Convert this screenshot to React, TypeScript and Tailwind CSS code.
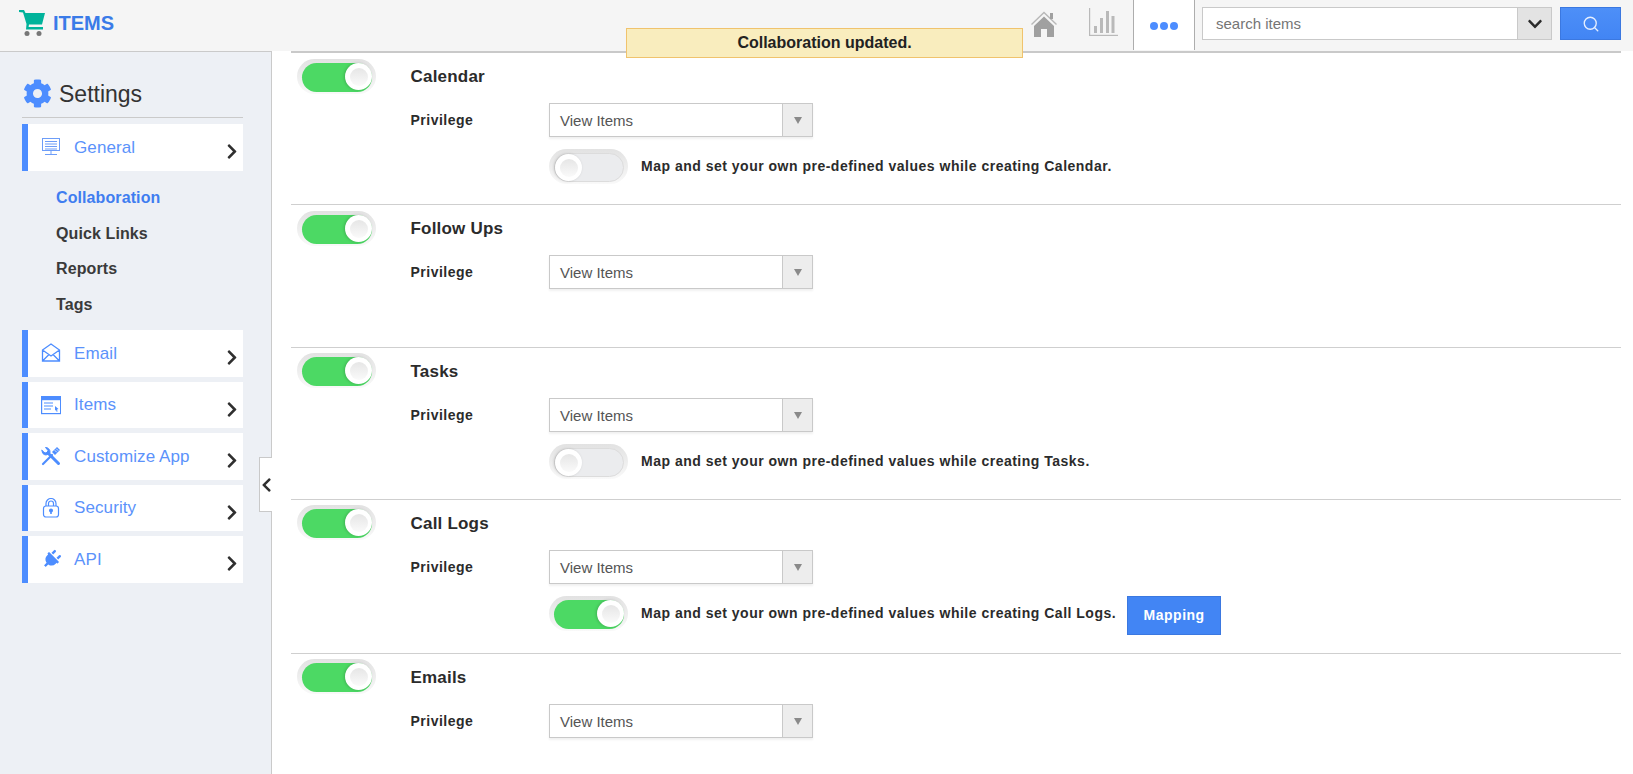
import { FaChevronDown, FaChevronLeft, FaChevronRight, FaCog, FaPlug } from "react-icons/fa";
import { Search } from "lucide-react";
import type { ReactNode } from "react";

const FONT = "font-['Liberation_Sans',Arial,sans-serif]";

function Toggle({ on }: { on: boolean }) {
  return (
    <div className="w-[79px] h-[35px] rounded-full bg-gradient-to-b from-[#e2e2e2] to-[#f9f9f9] pt-[4px] pb-[2px] pl-[5px] pr-[4px] shrink-0">
      <div
        className={
          on
            ? "h-full rounded-full bg-[#4cd964] flex items-start justify-end"
            : "h-full rounded-full bg-[#ebecee] border border-[#dcdcdc] flex items-start justify-start"
        }
      >
        <div className="w-[27px] h-[27px] rounded-full bg-white flex items-center justify-center shadow-[-1px_0_3px_rgba(0,0,0,0.18)]">
          <div className="w-[18px] h-[18px] rounded-full bg-gradient-to-b from-[#e6e6e6] to-[#fafafa]"></div>
        </div>
      </div>
    </div>
  );
}

function Section({
  title,
  height,
  top,
  first,
  map,
}: {
  title: string;
  height: string;
  top: string;
  first?: boolean;
  map?: { label: string; on: boolean; mapping?: boolean };
}) {
  return (
    <section className={`flex pl-[6px] ${first ? "border-t-2 border-[#c9c9c9]" : "border-t border-[#cfcfcf]"} ${height}`}>
      <div className={`w-[113.5px] shrink-0 ${top}`}>
        <Toggle on />
      </div>
      <div className="flex-1">
        <h3 className="pt-[14px] h-[34px] text-[17px] tracking-[0.2px] leading-[20px] font-bold text-[#2b2b2b]">{title}</h3>
        <div className="flex items-center mt-[16px]">
          <span className="w-[138.5px] text-[14px] tracking-[0.5px] font-bold text-[#2b2b2b]">Privilege</span>
          <div className="w-[264px] h-[34px] bg-white border border-[#c9c9c9] shadow-[0_2px_2px_rgba(0,0,0,0.06)] flex">
            <span className="flex-1 pl-[10px] text-[15px] leading-[34px] text-[#555555]">View Items</span>
            <span className="w-[30px] bg-[#ededed] border-l border-[#c9c9c9] flex items-center justify-center">
              <span className="border-x-[4px] border-x-transparent border-t-[7px] border-t-[#8a8a8a]"></span>
            </span>
          </div>
        </div>
        {map && (
          <div className="flex items-start ml-[138.5px] mt-[12px]">
            <Toggle on={map.on} />
            <span className="ml-[13px] text-[14px] leading-[34px] tracking-[0.5px] font-bold text-[#2b2b2b]">{map.label}</span>
            {map.mapping && (
              <span className="ml-[11px] w-[94px] h-[39px] bg-[#4285f4] border border-[#3b78e0] text-white text-[14px] tracking-[0.5px] font-bold flex items-center justify-center">
                Mapping
              </span>
            )}
          </div>
        )}
      </div>
    </section>
  );
}

function NavCard({ icon, label, height = "h-[47px]", className = "" }: { icon: ReactNode; label: string; height?: string; className?: string }) {
  return (
    <div className={`${height} bg-white border-l-[6px] border-[#4d8dff] flex items-center ${className}`}>
      <div className="w-[20px] h-[20px] ml-[13px] flex items-center justify-center text-[#4d8dff] -mt-[1px]">{icon}</div>
      <span className="ml-[13px] text-[17px] tracking-[0.1px] text-[#5b92fb]">{label}</span>
      <FaChevronRight className="ml-auto mr-[5px] mt-[8px] text-[#2f2f2f] w-[12px] h-[17px]" />
    </div>
  );
}

const subLinks = [
  { label: "Collaboration", cls: "text-[#3f7df0]" },
  { label: "Quick Links", cls: "text-[#3a3a3a]" },
  { label: "Reports", cls: "text-[#3a3a3a]" },
  { label: "Tags", cls: "text-[#3a3a3a]" },
];

export default function App() {
  return (
    <div className={`${FONT} w-full h-[774px] overflow-hidden bg-white flex flex-col relative`}>
      {/* header */}
      <header className="h-[51px] shrink-0 bg-[#f5f5f5] flex items-start">
        <div className="flex items-center pl-[18px] h-[46px]">
          <svg width="28" height="28" viewBox="0 0 28 28">
            <path d="M1 1h5l1.5 3H27l-3 11.5H11l-.4 2.5H25v2.5H8L8.5 15 5 3.5 1 3z" fill="#00b39b" />
            <circle cx="9" cy="24.5" r="2.5" fill="#777" />
            <circle cx="21" cy="24.5" r="2.5" fill="#777" />
          </svg>
          <span className="ml-[7px] text-[20px] font-bold text-[#3a7be8]">ITEMS</span>
        </div>
        <div className="ml-auto flex items-start">
          <svg width="26" height="26" viewBox="0 0 26 26" className="mt-[11px] mr-[32px]">
            <path d="M0.5 13.5 13 1.5l12.5 12" fill="none" stroke="#b8b8b8" strokeWidth="1.4" />
            <rect x="19" y="2" width="3" height="6" fill="#a0a0a0" />
            <path d="M3 15 13 5.5 23 15v11h-7v-8h-6v8H3z" fill="#a0a0a0" />
          </svg>
          <svg width="29" height="28" viewBox="0 0 29 28" className="mt-[8px] mr-[15px]" fill="#b9b9b9">
            <rect x="0" y="0" width="1.2" height="28" />
            <rect x="0" y="26.8" width="29" height="1.2" />
            <rect x="5" y="18" width="3" height="7" />
            <rect x="11" y="10" width="3" height="15" />
            <rect x="17" y="3" width="3" height="22" />
            <rect x="22.5" y="8" width="3" height="17" />
          </svg>
          <div className="w-[62px] h-[50px] bg-white border-x border-[#adadad] flex items-center justify-center gap-[2px] pt-[2px]">
            <span className="w-[8px] h-[8px] rounded-full bg-[#4d8dff]"></span>
            <span className="w-[8px] h-[8px] rounded-full bg-[#4d8dff]"></span>
            <span className="w-[8px] h-[8px] rounded-full bg-[#4d8dff]"></span>
          </div>
          <div className="ml-[7px] mt-[7px] w-[350px] h-[33px] bg-white border border-[#c9c9c9] flex">
            <span className="flex-1 pl-[13px] text-[15px] leading-[31px] text-[#757575]">search items</span>
            <span className="w-[34px] bg-[#e3e3e3] border-l border-[#c9c9c9] flex items-center justify-center">
              <FaChevronDown className="w-[16px] h-[16px] text-[#2b2b2b]" />
            </span>
          </div>
          <div className="ml-[8px] mr-[12px] mt-[7px] w-[61px] h-[33px] bg-gradient-to-b from-[#4d8ff8] to-[#4285f4] border border-[#3b78e0] flex items-center justify-center">
            <Search className="w-[18px] h-[18px] text-[#e6efff]" strokeWidth={1.8} />
          </div>
        </div>
      </header>

      <div className="flex-1 flex min-h-0">
        {/* sidebar */}
        <aside className="w-[272px] shrink-0 bg-[#edf0f5] border-r border-t border-[#cacaca] pl-[22px] pr-[28px] relative">
          <div className="h-[66px] flex items-center border-b border-[#cacaca] pl-[1px] pt-[19px]">
            <FaCog className="w-[29px] h-[29px] text-[#4d8dff] -mt-[1px]" />
            <span className="ml-[7px] text-[23px] text-[#333333]">Settings</span>
          </div>
          <NavCard className="mt-[6px]" label="General" icon={
            <svg width="20" height="20" viewBox="0 0 20 20" fill="none" stroke="#6d9df8" strokeWidth="1">
              <rect x="1.5" y="1.5" width="17" height="12" />
              <path d="M4 4.5h12M4 7h12M4 9.5h12M4 12h12M10 14v3M4 17.5h12" />
            </svg>
          } />
          <nav className="pl-[34px] pt-[9px] pb-[8px]">
            {subLinks.map((s) => (
              <div key={s.label} className={`h-[35.5px] text-[16px] tracking-[0.1px] font-bold leading-[35.5px] ${s.cls}`}>{s.label}</div>
            ))}
          </nav>
          <div className="flex flex-col gap-[5px]">
            <NavCard label="Email" icon={
              <svg width="20" height="20" viewBox="0 0 20 20" fill="none" stroke="#4d8dff" strokeWidth="1.3">
                <path d="M1.5 7 10 1 18.5 7v11h-17zM1.5 7 10 13 18.5 7M1.5 18 8 11.5M18.5 18 12 11.5" />
              </svg>
            } />
            <NavCard height="h-[46px]" label="Items" icon={
              <svg width="20" height="20" viewBox="0 0 20 20" fill="none" stroke="#4d8dff" strokeWidth="1.2">
                <rect x="0.6" y="1.6" width="19" height="17" />
                <rect x="0.6" y="1.6" width="19" height="3" fill="#4d8dff" />
                <path d="M3 8h9M3 11h9M3 14h7" />
                <path d="M14 11l3.5 3-1.5.5.6 2-1 .3-.6-2-1 .9z" fill="#4d8dff" stroke="none" />
              </svg>
            } />
            <NavCard label="Customize App" icon={
              <svg width="20" height="20" viewBox="0 0 20 20" fill="none" stroke="#4d8dff" strokeLinecap="round">
                <path d="M7 7 17.5 17.5" strokeWidth="3" />
                <path d="M1 4.5 4 7l2-.5L7 4.5 4.5 1.5A4.5 4.5 0 0 1 9 6.5L7.5 8 5 9A4.5 4.5 0 0 1 1 4.5z" fill="#4d8dff" strokeWidth="1" />
                <path d="M2 18 11 9" strokeWidth="2.2" />
                <path d="M12.5 7.5 17.5 2.5" strokeWidth="4.2" strokeLinecap="butt" />
                <path d="M14 4.5l1.5 1.5M15.5 3l1.5 1.5" stroke="#ffffff" strokeWidth="0.8" />
              </svg>
            } />
            <NavCard height="h-[46px]" label="Security" icon={
              <svg width="20" height="20" viewBox="0 0 20 20" fill="none" stroke="#4d8dff" strokeWidth="1.2">
                <rect x="2.5" y="8" width="15" height="11" rx="2.5" />
                <path d="M5 8V5.5a5 5 0 0 1 10 0V8M7.5 8V5.5a2.5 2.5 0 0 1 5 0V8" />
                <circle cx="10" cy="12.5" r="1.4" fill="#4d8dff" />
                <path d="M10 13v3" strokeWidth="1.6" />
              </svg>
            } />
            <NavCard label="API" icon={<FaPlug className="w-[19px] h-[19px] rotate-45" />} />
          </div>
          {/* collapse handle */}
          <div className="absolute left-[259px] top-[405px] w-[13px] h-[55px] bg-white border border-r-0 border-[#c9c9c9] flex items-center justify-end">
            <FaChevronLeft className="w-[11px] h-[16px] text-[#2f2f2f]" />
          </div>
        </aside>

        {/* collaboration settings */}
        <main className="flex-1 min-w-0 pl-[19px] pr-[12px] bg-white">
          <Section first title="Calendar" height="h-[153px]" top="pt-[6px]" map={{ label: "Map and set your own pre-defined values while creating Calendar.", on: false }} />
          <Section title="Follow Ups" height="h-[143px]" top="pt-[6px]" />
          <Section title="Tasks" height="h-[152px]" top="pt-[5px]" map={{ label: "Map and set your own pre-defined values while creating Tasks.", on: false }} />
          <Section title="Call Logs" height="h-[154px]" top="pt-[5px]" map={{ label: "Map and set your own pre-defined values while creating Call Logs.", on: true, mapping: true }} />
          <Section title="Emails" height="h-[120px]" top="pt-[5px]" />
        </main>
      </div>

      {/* toast */}
      <div className="absolute left-[626px] top-[28px] w-[397px] h-[30px] bg-[#f9edbe] border border-[#f0c36d] flex items-center justify-center text-[16px] font-bold text-[#222222]">
        Collaboration updated.
      </div>
    </div>
  );
}
